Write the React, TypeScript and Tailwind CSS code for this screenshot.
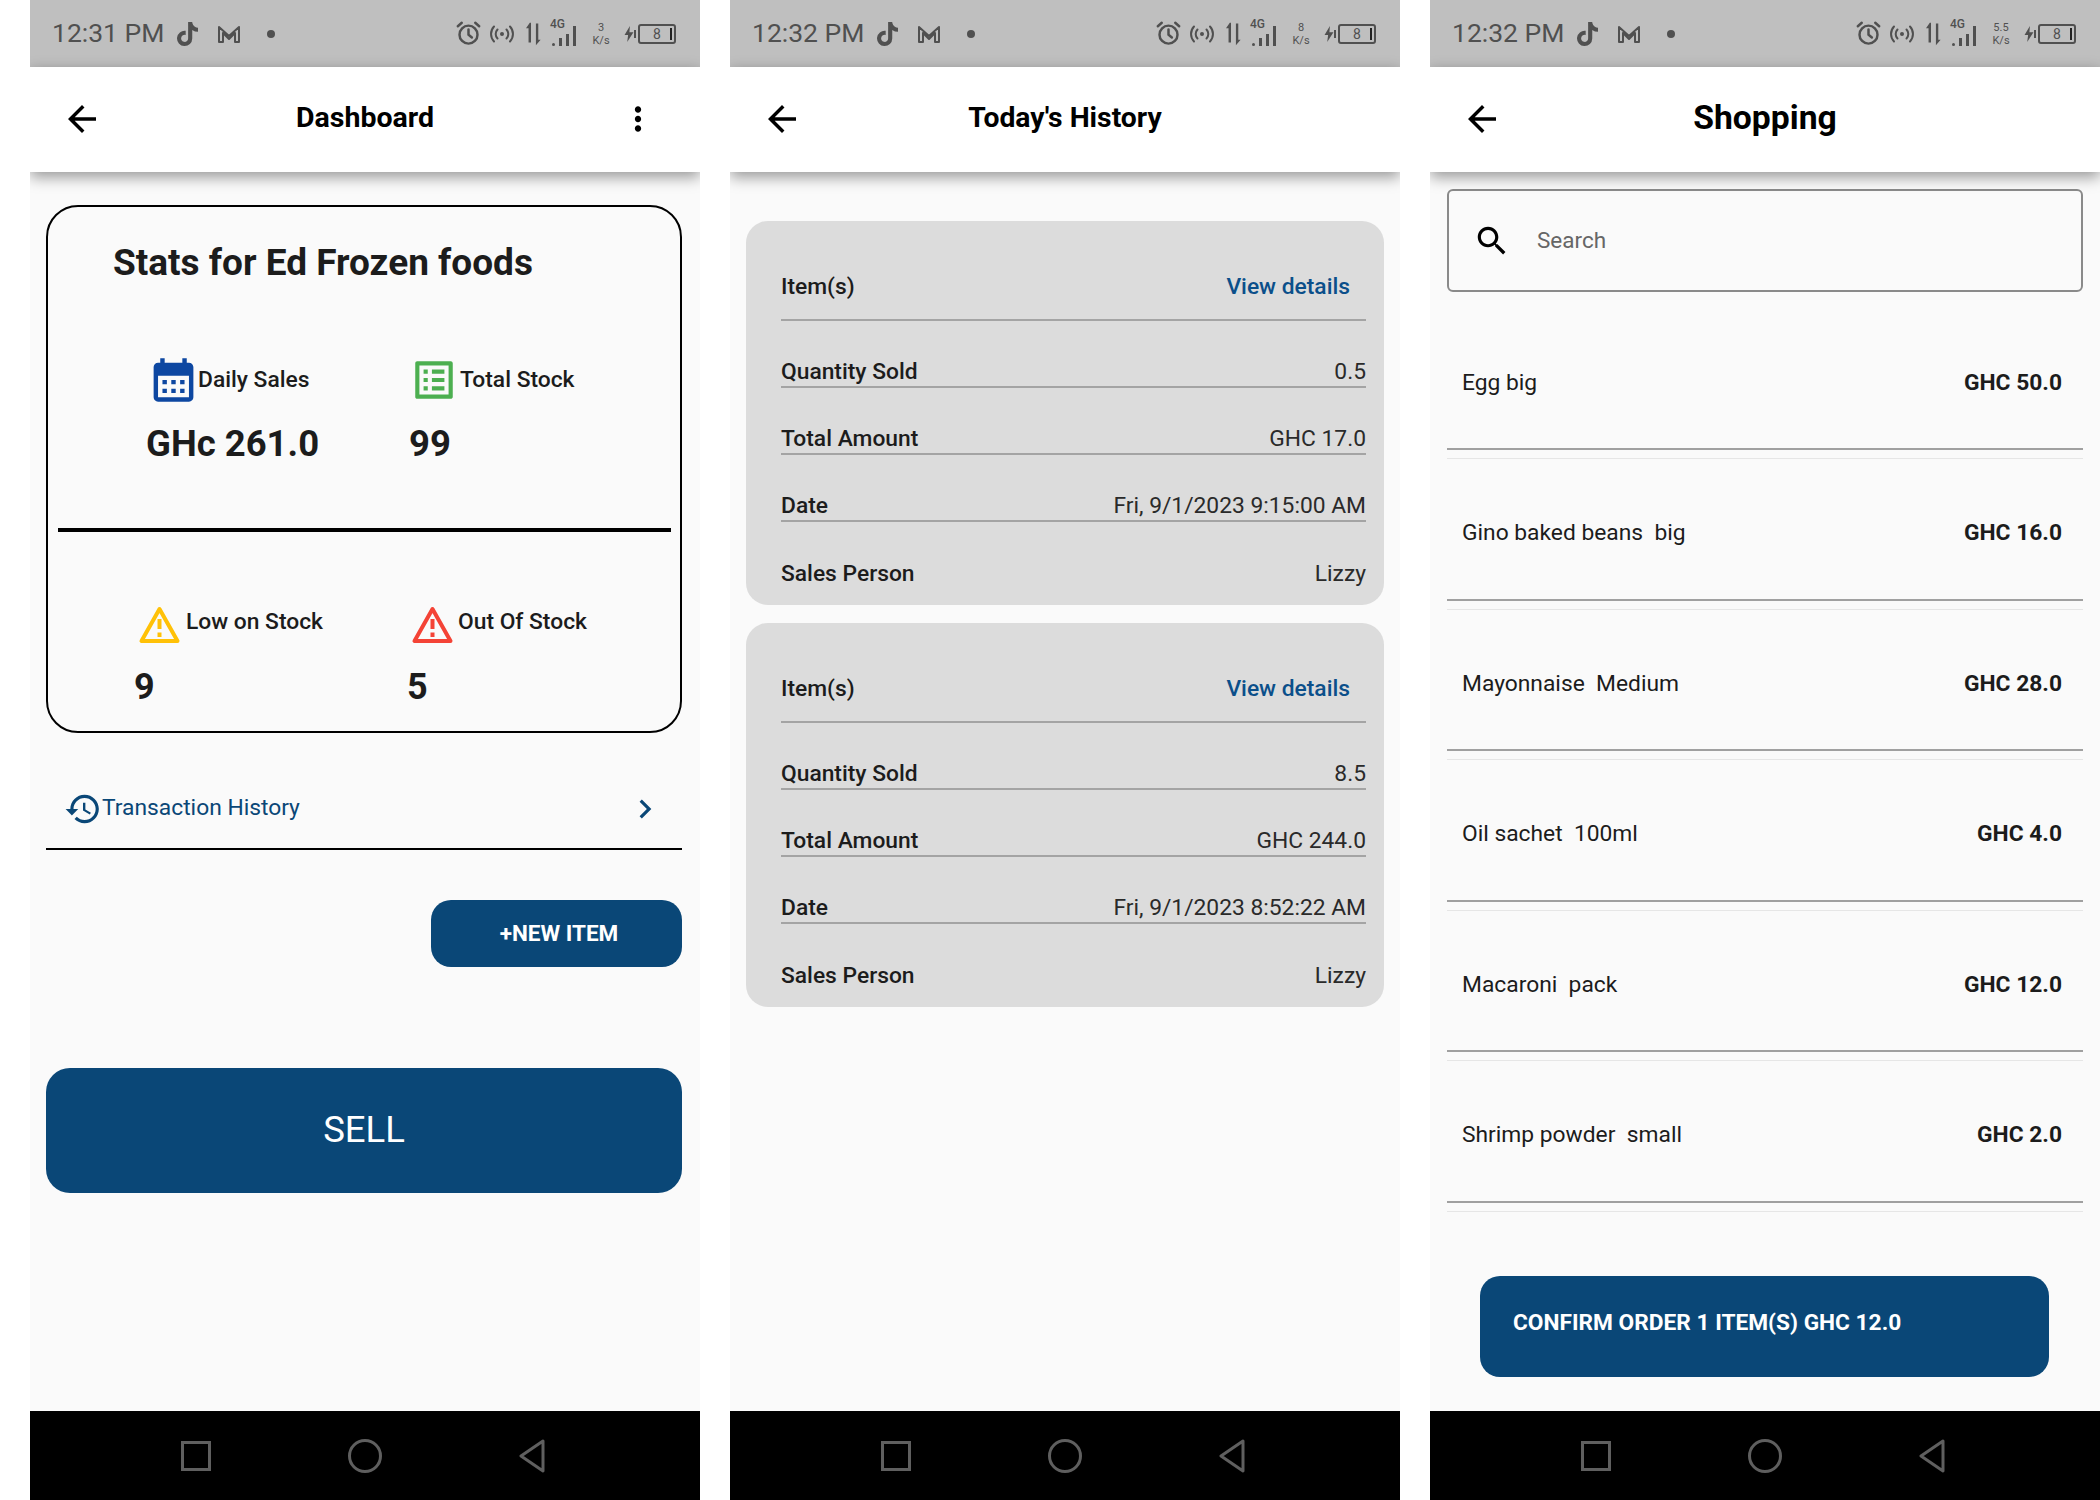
import { FaTiktok } from "react-icons/fa";

const font = { fontFamily: "Roboto, sans-serif" };

function Icon({ d, className }: { d: string; className?: string }) {
    return <svg viewBox="0 0 24 24" preserveAspectRatio="none" fill="currentColor" className={className}><path d={d} /></svg>;
}

const ARROW_BACK = "M20 11H7.83l5.59-5.59L12 4l-8 8 8 8 1.41-1.41L7.83 13H20v-2z";
const MORE_VERT = "M12 8c1.1 0 2-.9 2-2s-.9-2-2-2-2 .9-2 2 .9 2 2 2zm0 2c-1.1 0-2 .9-2 2s.9 2 2 2 2-.9 2-2-.9-2-2-2zm0 6c-1.1 0-2 .9-2 2s.9 2 2 2 2-.9 2-2-.9-2-2-2z";
const CALENDAR = "M19 4h-1V2h-2v2H8V2H6v2H5c-1.1 0-2 .9-2 2v14c0 1.1.9 2 2 2h14c1.1 0 2-.9 2-2V6c0-1.1-.9-2-2-2zm0 16H5V10h14v10zM9 14H7v-2h2v2zm4 0h-2v-2h2v2zm4 0h-2v-2h2v2zm-8 4H7v-2h2v2zm4 0h-2v-2h2v2zm4 0h-2v-2h2v2z";
const LIST_ALT = "M19 5v14H5V5h14m1.1-2H3.9c-.5 0-.9.4-.9.9v16.2c0 .4.4.9.9.9h16.2c.4 0 .9-.5.9-.9V3.9c0-.5-.5-.9-.9-.9zM11 7h6v2h-6V7zm0 4h6v2h-6v-2zm0 4h6v2h-6zM7 7h2v2H7zm0 4h2v2H7zm0 4h2v2H7z";
const HISTORY = "M13 3c-4.97 0-9 4.03-9 9H1l3.89 3.89.07.14L9 12H6c0-3.87 3.13-7 7-7s7 3.13 7 7-3.13 7-7 7c-1.93 0-3.68-.79-4.94-2.06l-1.42 1.42C8.27 19.99 10.51 21 13 21c4.97 0 9-4.03 9-9s-4.03-9-9-9zm-1 5v5l4.28 2.54.72-1.21-3.5-2.08V8H12z";
const CHEVRON = "M10 6L8.59 7.41 13.17 12l-4.58 4.59L10 18l6-6z";
const SEARCH = "M15.5 14h-.79l-.28-.27C15.41 12.59 16 11.11 16 9.5 16 5.91 13.09 3 9.5 3S3 5.91 3 9.5 5.91 16 9.5 16c1.61 0 3.09-.59 4.23-1.57l.27.28v.79l5 4.99L20.49 19l-4.99-5zm-6 0C7.01 14 5 11.99 5 9.5S7.01 5 9.5 5 14 7.01 14 9.5 11.99 14 9.5 14z";

function StatusBar({ time, speed }: { time: string; speed: string }) {
    return <div className="flex h-[67px] shrink-0 items-center bg-[#bfbfbf] pl-[22px] text-[#505050]">
        <span className="w-[124px] text-[26.500px] leading-none">{time}</span>
        <span className="w-[40px]"><FaTiktok className="h-[24px] w-[23px]" /></span>
        <svg viewBox="0 0 24 20" className="h-[20px] w-[26px]" fill="none" stroke="currentColor" strokeWidth="2" strokeLinejoin="round">
            <path d="M2 18V3l10 9 10-9v15h-4V9l-6 6-6-6v9z" />
        </svg>
        <span className="ml-[25px] h-[8px] w-[8px] rounded-full bg-current" />
        <div className="ml-auto mr-[24px] flex items-center">
            <svg viewBox="0 0 24 24" className="h-[27px] w-[27px]" fill="none" stroke="currentColor" strokeWidth="2.200" strokeLinecap="round">
                <circle cx="12" cy="13" r="8" />
                <path d="M12 8.500V13l3 2.500M2.500 5.500 6 2.500M21.500 5.500 18 2.500" />
            </svg>
            <svg viewBox="0 0 24 24" className="ml-[8px] h-[24px] w-[24px]" fill="none" stroke="currentColor" strokeWidth="2" strokeLinecap="round">
                <circle cx="12" cy="12" r="2" fill="currentColor" stroke="none" />
                <path d="M7.500 7.500a6.500 6.500 0 0 0 0 9M16.500 7.500a6.500 6.500 0 0 1 0 9M4 4.500a11 11 0 0 0 0 15M20 4.500a11 11 0 0 1 0 15" />
            </svg>
            <svg viewBox="0 0 18 26" className="ml-[12px] h-[26px] w-[17px]" fill="currentColor">
                <path d="M4 1 0 7h2.700v15h2.600V1zM10.500 25l5-6h-2.500V2h-2.500z" />
            </svg>
            <div className="relative ml-[7px] h-[28px] w-[29px]">
                <span className="absolute left-[0px] top-[-2px] text-[12px] font-medium leading-none">4G</span>
                <div className="absolute bottom-[2px] left-[2px] flex items-end gap-[4px]">
                    <span className="h-[3px] w-[3px] rounded-full bg-current" />
                    <span className="h-[8px] w-[3px] bg-current" />
                    <span className="h-[12px] w-[3px] bg-current" />
                    <span className="mt-[-6px] h-[20px] w-[3px] bg-current" />
                </div>
            </div>
            <div className="ml-[11px] flex w-[22px] flex-col items-center text-[11px] leading-[13px]">
                <span>{speed}</span>
                <span>K/s</span>
            </div>
            <svg viewBox="0 0 10 18" className="ml-[12px] h-[16px] w-[10px]" fill="currentColor">
                <path d="M6 0 0 10h4l-1 8 7-11H5.500z" />
            </svg>
            <span className="h-[8px] w-[2px] bg-current" />
            <div className="ml-[2px] flex h-[20px] w-[38px] items-center rounded-[3px] border-2 border-current pl-[13px] pr-[2px] text-[14px] leading-none">
                <span>8</span>
                <span className="ml-auto h-[12px] w-[2px] bg-[#222]" />
            </div>
        </div>
    </div>;
}

function AppBar({ title, titleClass, menu }: { title: string; titleClass: string; menu?: boolean }) {
    return <div className="relative z-10 flex h-[105px] shrink-0 items-center justify-between bg-white px-[31px] pb-[2px] shadow-[0_5px_14px_rgba(0,0,0,0.4)]">
        <Icon d={ARROW_BACK} className="h-[42px] w-[42px] text-black" />
        <span className={`text-black ${titleClass}`}>{title}</span>
        <div className="h-[38px] w-[42px]">
            {menu ? <Icon d={MORE_VERT} className="ml-[-8px] h-[38px] w-[38px] text-black" /> : null}
        </div>
    </div>;
}

function NavBar() {
    return <div className="mt-auto flex h-[89px] shrink-0 items-center justify-between bg-black pl-[151px] pr-[154px]">
        <span className="h-[30px] w-[30px] border-[3px] border-[#5f5f5f]" />
        <span className="h-[34px] w-[34px] rounded-full border-[3px] border-[#5f5f5f]" />
        <svg viewBox="0 0 28 34" className="h-[34px] w-[28px]" fill="none" stroke="#5f5f5f" strokeWidth="3" strokeLinejoin="round">
            <path d="M25 2 3 17l22 15z" />
        </svg>
    </div>;
}

function WarningIcon({ className }: { className: string }) {
    return <svg viewBox="0 0 42 38" className={`h-[38px] w-[43px] translate-y-[3px] ${className}`} fill="none" stroke="currentColor" strokeWidth="4" strokeLinejoin="round">
        <path d="M21 3 3 35h36z" />
        <path d="M21 13v10M21 26.500v4.500" />
    </svg>;
}

function Stat({ icon, label, gap }: { icon: React.ReactNode; label: string; gap: string }) {
    return <div className={`flex items-center ${gap}`}>
        {icon}
        <span className="text-[22.800px] font-medium leading-none text-[#1c1c1c]">{label}</span>
    </div>;
}

function DashboardScreen() {
    return <div className="flex grow flex-col pl-[16px] pr-[18px] pt-[33px]">
        <div className="h-[528px] rounded-[32px] border-2 border-black">
            <h1 className="ml-[65px] mt-[34px] text-[37px] font-bold leading-[44px] text-[#1c1c1c]">Stats for Ed Frozen foods</h1>
            <div className="ml-[98px] mt-[69px] grid h-[174px] grid-cols-[263px_1fr] content-start">
                <div>
                    <Stat gap="ml-[1px]" label="Daily Sales" icon={<Icon d={CALENDAR} className="mr-[-2px] h-[52px] w-[53px] text-[#0d47a1]" />} />
                    <p className="mt-[18px] text-[36.500px] font-bold leading-[40px] text-[#1c1c1c]">GHc 261.0</p>
                </div>
                <div>
                    <Stat gap="ml-[0px] gap-[1px]" label="Total Stock" icon={<Icon d={LIST_ALT} className="my-[1px] h-[50px] w-[50px] text-[#4caf50]" />} />
                    <p className="mt-[18px] text-[36.500px] font-bold leading-[40px] text-[#1c1c1c]">99</p>
                </div>
            </div>
            <div className="ml-[10px] mr-[9px] h-[4px] bg-black" />
            <div className="ml-[86px] mt-[71px] grid grid-cols-[273px_1fr]">
                <div>
                    <Stat gap="ml-[4px] gap-[5px]" label="Low on Stock" icon={<WarningIcon className="text-[#ffc107]" />} />
                    <p className="mt-[26px] text-[36px] font-bold leading-[40px] text-[#1c1c1c]">9</p>
                </div>
                <div>
                    <Stat gap="ml-[4px] gap-[4px]" label="Out Of Stock" icon={<WarningIcon className="text-[#f44336]" />} />
                    <p className="mt-[26px] text-[36px] font-bold leading-[40px] text-[#1c1c1c]">5</p>
                </div>
            </div>
        </div>
        <div className="flex h-[117px] items-center border-b-2 border-black pl-[18px] pr-[18px] pt-[36px] text-[#0a4777]">
            <Icon d={HISTORY} className="h-[38px] w-[38px]" />
            <span className="text-[22.800px] leading-none">Transaction History</span>
            <Icon d={CHEVRON} className="ml-auto h-[38px] w-[38px]" />
        </div>
        <div className="mt-[50px] flex justify-end">
            <button className="h-[67px] w-[251px] rounded-[20px] bg-[#0a4777] pl-[5px] text-[22.500px] font-bold text-white">+NEW ITEM</button>
        </div>
        <button className="mt-[101px] h-[125px] rounded-[24px] bg-[#0a4777] text-[36.500px] text-white">SELL</button>
    </div>;
}

function HistoryRow({ label, value, line, height }: { label: string; value: string; line?: boolean; height: string }) {
    return <div className={`flex items-end justify-between pb-[1px] ${height} ${line ? "border-b-2 border-[#a4a4a4]" : ""}`}>
        <span className="text-[22.800px] font-medium leading-[26px] text-[#1c1c1c]">{label}</span>
        <span className="text-[22.800px] leading-[26px] text-[#2a2a2a]">{value}</span>
    </div>;
}

function HistoryCard({ qty, total, date }: { qty: string; total: string; date: string }) {
    return <div className="h-[384px] rounded-[22px] bg-[#dcdcdc] pl-[35px] pr-[18px]">
        <div className="flex h-[100px] items-center justify-between border-b-2 border-[#a4a4a4] pr-[16px] pt-[34px]">
            <span className="text-[22.800px] font-medium text-[#1c1c1c]">Item(s)</span>
            <span className="text-[22.800px] font-medium text-[#0b4f8a]">View details</span>
        </div>
        <HistoryRow label="Quantity Sold" value={qty} line height="h-[67px]" />
        <HistoryRow label="Total Amount" value={total} line height="h-[67px]" />
        <HistoryRow label="Date" value={date} line height="h-[67px]" />
        <HistoryRow label="Sales Person" value="Lizzy" height="h-[66px]" />
    </div>;
}

function HistoryScreen() {
    return <div className="flex grow flex-col gap-[18px] px-[16px] pt-[49px]">
        <HistoryCard qty="0.5" total="GHC 17.0" date="Fri, 9/1/2023 9:15:00 AM" />
        <HistoryCard qty="8.5" total="GHC 244.0" date="Fri, 9/1/2023 8:52:22 AM" />
    </div>;
}

const products = [
    ["Egg big", "GHC 50.0"],
    ["Gino baked beans  big", "GHC 16.0"],
    ["Mayonnaise  Medium", "GHC 28.0"],
    ["Oil sachet  100ml", "GHC 4.0"],
    ["Macaroni  pack", "GHC 12.0"],
    ["Shrimp powder  small", "GHC 2.0"],
];

function ShoppingScreen() {
    return <div className="flex grow flex-col px-[17px] pt-[17px]">
        <div className="flex h-[103px] items-center rounded-[6px] border-2 border-[#8a8a8a] pl-[24px] text-[22.500px] text-[#666]">
            <Icon d={SEARCH} className="h-[38px] w-[38px] text-black" />
            <span className="ml-[26px]">Search</span>
        </div>
        <div className="mt-[12px]">
            {products.map(([name, price]) => <div key={name} className="h-[150.500px]">
                <div className="flex h-[146px] items-center justify-between border-b-2 border-[#a0a0a0] pl-[15px] pr-[21px] pt-[14px]">
                    <span className="whitespace-pre text-[22.800px] text-[#1c1c1c]">{name}</span>
                    <span className="text-[22.800px] font-bold text-[#1c1c1c]">{price}</span>
                </div>
                <div className="mt-[8px] h-[1px] bg-[#e6e6e6]" />
            </div>)}
        </div>
        <button className="ml-[33px] mt-[69px] h-[101px] w-[569px] rounded-[20px] bg-[#0a4777] pb-[7px] pl-[33px] text-left text-[22.700px] font-bold text-white">
            CONFIRM ORDER 1 ITEM(S) GHC 12.0
        </button>
    </div>;
}

function Phone({ time, speed, children }: { time: string; speed: string; children: React.ReactNode }) {
    return <div className="flex h-full w-[670px] flex-col overflow-hidden bg-[#fafafa]">
        <StatusBar time={time} speed={speed} />
        {children}
        <NavBar />
    </div>;
}

export default function App() {
    return <div style={font} className="flex h-[1500px] w-[2100px] gap-[30px] overflow-hidden bg-white pl-[30px]">
        <Phone time="12:31 PM" speed="3">
            <AppBar title="Dashboard" titleClass="text-[28.500px] font-bold" menu />
            <DashboardScreen />
        </Phone>
        <Phone time="12:32 PM" speed="8">
            <AppBar title="Today's History" titleClass="text-[28.300px] font-bold" />
            <HistoryScreen />
        </Phone>
        <Phone time="12:32 PM" speed="5.5">
            <AppBar title="Shopping" titleClass="text-[33.700px] font-bold" />
            <ShoppingScreen />
        </Phone>
    </div>;
}
